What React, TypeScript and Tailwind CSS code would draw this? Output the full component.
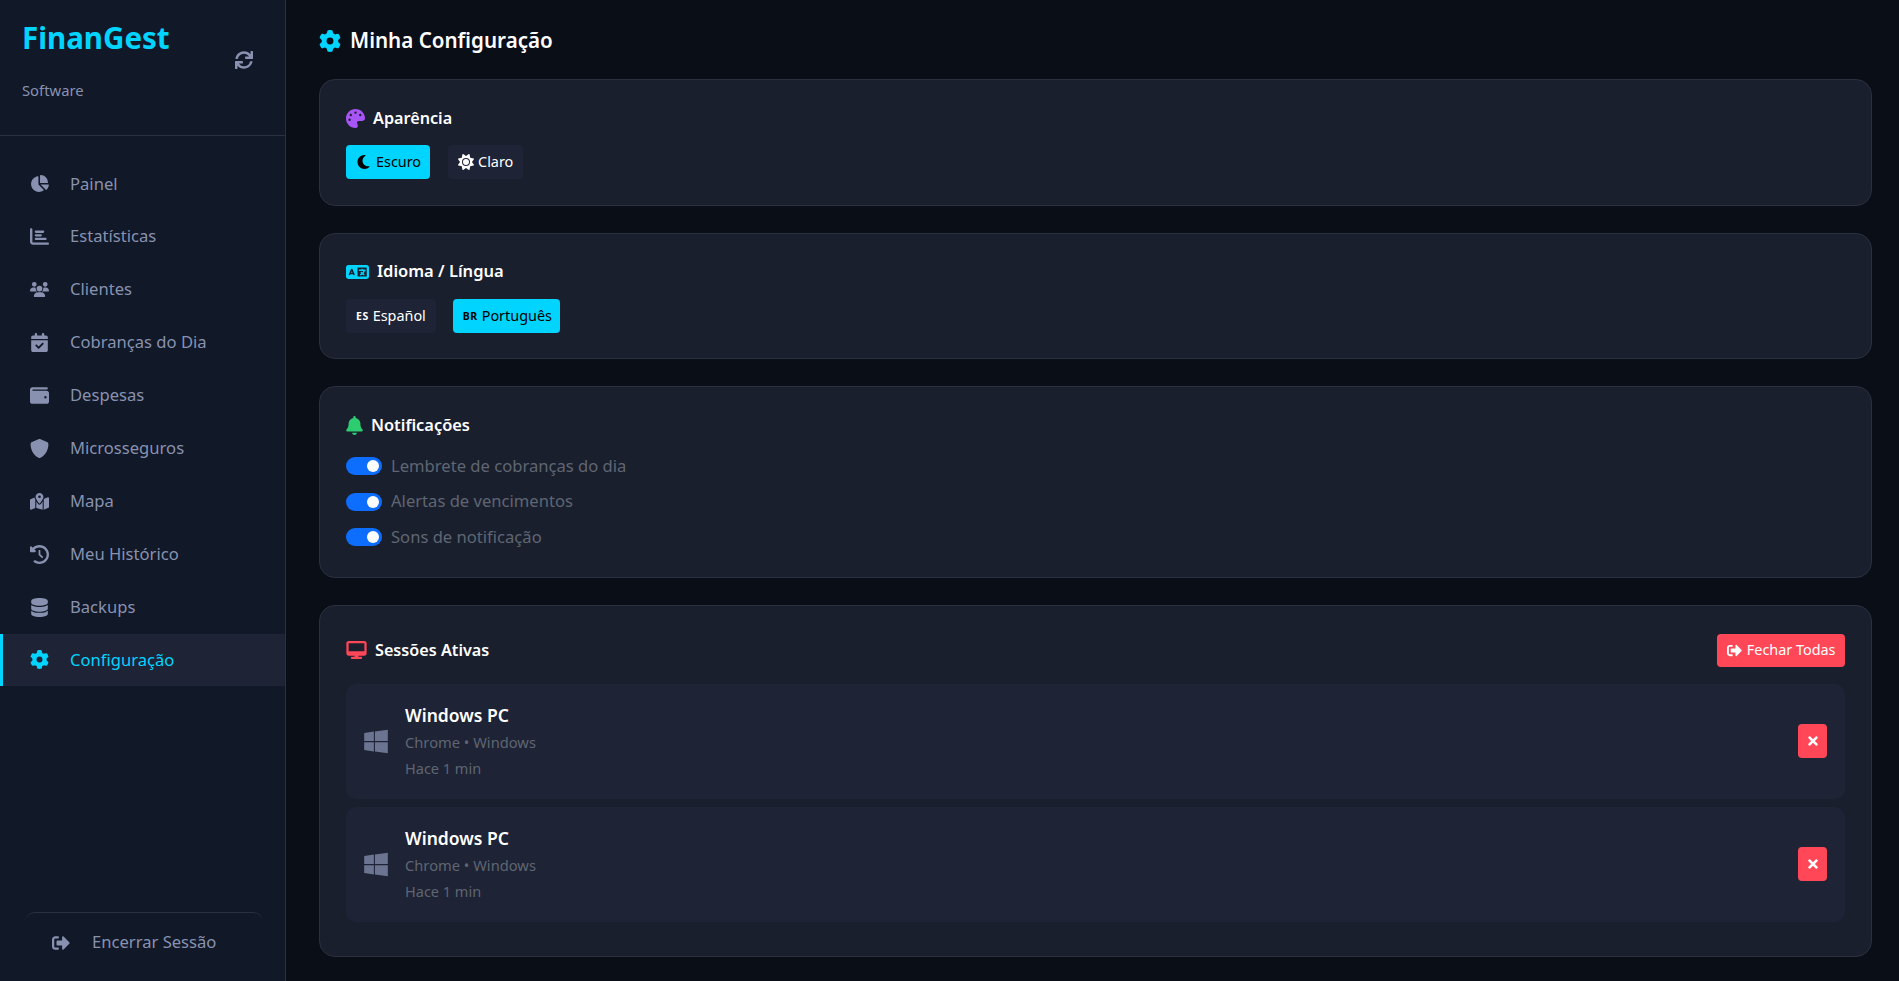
import React from "react";
import {
  FaChartPie, FaChartBar, FaUsers, FaCalendarCheck, FaWallet, FaShield, FaMapLocationDot,
  FaClockRotateLeft, FaDatabase, FaGear, FaPalette, FaMoon, FaSun,
  FaLanguage, FaBell, FaDesktop, FaWindows,
} from "react-icons/fa6";
import { FaSync, FaSignOutAlt, FaTimes } from "react-icons/fa";

const nav = [
  { label: "Painel", Icon: FaChartPie },
  { label: "Estatísticas", Icon: FaChartBar },
  { label: "Clientes", Icon: FaUsers },
  { label: "Cobranças do Dia", Icon: FaCalendarCheck },
  { label: "Despesas", Icon: FaWallet },
  { label: "Microsseguros", Icon: FaShield },
  { label: "Mapa", Icon: FaMapLocationDot },
  { label: "Meu Histórico", Icon: FaClockRotateLeft },
  { label: "Backups", Icon: FaDatabase },
  { label: "Configuração", Icon: FaGear, active: true },
];

function Session() {
  return (
    <div className="flex h-[114.5px] items-center rounded-[10px] bg-[#1e2335] px-[18px]">
      <FaWindows className="h-[27px] w-[24px] shrink-0 text-[#6b7490]" />
      <div className="ml-[17px] flex-1">
        <div className="text-[17.5px] leading-[24px] font-semibold text-white">Windows PC</div>
        <div className="mt-[5px] text-[14.7px] leading-[21px] text-[#5f6672]">Chrome • Windows</div>
        <div className="mt-[5px] text-[14.5px] leading-[21px] text-[#5f6672]">Hace 1 min</div>
      </div>
      <button className="flex h-[34px] w-[29px] items-center justify-center rounded-[4px] bg-[#ff4757] text-white">
        <FaTimes className="h-[14px] w-[14px]" />
      </button>
    </div>
  );
}

function Toggle({ label }: { label: string }) {
  return (
    <div className="flex h-[18px] items-center">
      <div className="flex h-[18px] w-[36px] items-center justify-end rounded-full bg-[#0d6efd] pr-[3px]">
        <div className="h-[12px] w-[12px] rounded-full bg-white" />
      </div>
      <span className="ml-[9px] text-[16.6px] text-[#5f6672]">{label}</span>
    </div>
  );
}

export default function App() {
  return (
    <div className="flex h-[981px] overflow-hidden bg-[#0a0e17] font-['Noto_Sans',sans-serif]">
      <aside className="flex h-full w-[286px] shrink-0 flex-col border-r border-[#2a3040] bg-[#111827]">
        <div className="relative h-[136px] shrink-0 border-b border-[#2a3040] pl-[22px]">
          <div className="pt-[18px] text-[29.5px] leading-[40px] font-bold text-[#00d4ff]">FinanGest</div>
          <div className="pt-[22px] text-[14.8px] leading-[21px] text-[#8892b0]">Software</div>
          <FaSync className="absolute top-[51px] left-[235px] h-[18px] w-[18px] text-[#8892b0]" />
        </div>
        <nav className="flex flex-1 flex-col pt-[21.5px]">
          {nav.map(({ label, Icon, active }) => (
            <div
              key={label}
              className={
                active
                  ? "flex h-[52.9px] items-center border-l-[3px] border-[#00d4ff] bg-[#1e2335] pl-[27px] text-[#00d4ff]"
                  : "flex h-[52.9px] items-center border-l-[3px] border-transparent pl-[27px] text-[#8892b0]"
              }
            >
              <span className="flex w-[40px] shrink-0 justify-start">
                <Icon className="h-[19px] w-auto shrink-0" />
              </span>
              <span className="text-[16.6px]">{label}</span>
            </div>
          ))}
        </nav>
        <div className="mb-[9px] ml-[25px] mr-[22px] flex h-[60px] items-center justify-start rounded-t-[10px] border-t border-[#2a3040] pl-[27px] text-[#8892b0]">
          <FaSignOutAlt className="h-[18px] w-[18px] shrink-0" />
          <span className="ml-[22px] text-[16.6px]">Encerrar Sessão</span>
        </div>
      </aside>
      <main className="flex-1 pl-[33px] pr-[27px] pt-[26px] text-white">
        <h1 className="flex h-[29px] items-center text-[20.6px] font-semibold">
          <FaGear className="mr-[9px] h-[22px] w-[22px] text-[#00d4ff]" />
          Minha Configuração
        </h1>
        <div className="mt-[24px] flex flex-col gap-[27px]">
          <section className="h-[126.6px] rounded-[16px] border border-[#2a3040] bg-[#1a1f2e] px-[26px] pt-[26px]">
            <h2 className="flex h-[24px] items-center text-[16.2px] font-semibold">
              <FaPalette className="mr-[8px] h-[19px] w-[19px] text-[#a855f7]" />
              Aparência
            </h2>
            <div className="mt-[15px] flex gap-[18px]">
              <button className="flex h-[34px] items-center rounded-[4px] bg-[#00d4ff] pl-[10px] pr-[9px] text-[14.4px] text-black">
                <FaMoon className="mr-[5px] h-[16px] w-[15px]" />Escuro
              </button>
              <button className="flex h-[34px] items-center rounded-[4px] bg-[#1e2335] px-[10px] text-[14.4px] text-white">
                <FaSun className="mr-[4px] h-[16px] w-[16px]" />Claro
              </button>
            </div>
          </section>
          <section className="h-[126.6px] rounded-[16px] border border-[#2a3040] bg-[#1a1f2e] px-[26px] pt-[26px]">
            <h2 className="flex h-[24px] items-center text-[16.5px] font-semibold">
              <FaLanguage className="mr-[8px] h-[20px] w-[23px] text-[#00d4ff]" />
              Idioma / Língua
            </h2>
            <div className="mt-[15px] flex gap-[17px]">
              <button className="flex h-[34px] items-center rounded-[4px] bg-[#1e2335] px-[10px] text-[14.4px] text-white">
                <span className="mr-[4px] pt-[3px] text-[10.5px] font-bold tracking-[0.5px]">ES</span>Español
              </button>
              <button className="flex h-[34px] items-center rounded-[4px] bg-[#00d4ff] pl-[10px] pr-[8px] text-[14.4px] text-black">
                <span className="mr-[4px] pt-[3px] text-[10.5px] font-bold tracking-[0.5px]">BR</span>Português
              </button>
            </div>
          </section>
          <section className="h-[192px] rounded-[16px] border border-[#2a3040] bg-[#1a1f2e] px-[26px] pt-[26px]">
            <h2 className="flex h-[24px] items-center text-[16.4px] font-semibold">
              <FaBell className="mr-[8px] h-[19px] w-[17px] text-[#2ecc71]" />
              Notificações
            </h2>
            <div className="mt-[20px] flex flex-col gap-[17.4px]">
              <Toggle label="Lembrete de cobranças do dia" />
              <Toggle label="Alertas de vencimentos" />
              <Toggle label="Sons de notificação" />
            </div>
          </section>
          <section className="h-[352px] rounded-[16px] border border-[#2a3040] bg-[#1a1f2e] px-[26px] pt-[27px]">
            <div className="flex h-[34px] items-center justify-between">
              <h2 className="flex items-center text-[16.2px] font-semibold">
                <FaDesktop className="mr-[8px] h-[18px] w-[21px] text-[#ff4757]" />
                Sessões Ativas
              </h2>
              <button className="flex h-[33px] items-center rounded-[4px] bg-[#ff4757] px-[9.5px] text-[14.4px] text-white">
                <FaSignOutAlt className="mr-[5px] h-[15px] w-[15px]" />Fechar Todas
              </button>
            </div>
            <div className="mt-[17px] flex flex-col gap-[8.5px]">
              <Session />
              <Session />
            </div>
          </section>
        </div>
      </main>
    </div>
  );
}
